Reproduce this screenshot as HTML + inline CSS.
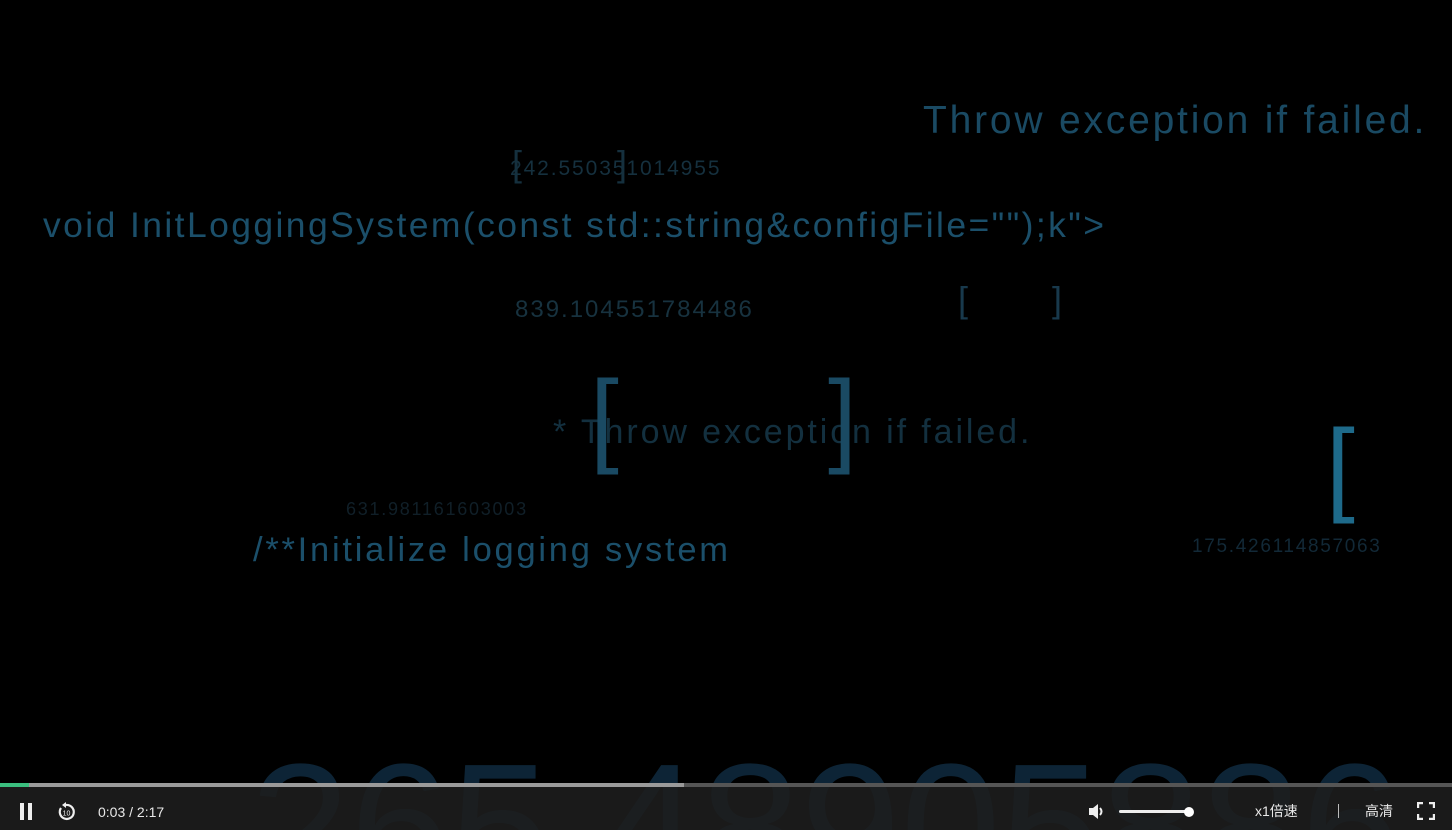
<!DOCTYPE html>
<html style="width:1452px;height:830px;overflow:hidden"><head><meta charset="utf-8"><style>
body{margin:0;width:1452px;height:830px;background:#000;overflow:hidden;position:relative;font-family:"Liberation Sans","Noto Sans CJK SC",sans-serif}
.t{position:absolute;white-space:nowrap;line-height:1}
.bar{position:absolute;left:0;top:787px;width:1452px;height:43px;background:rgba(30,30,30,.88)}
.ctl{position:absolute;color:#e8e8e8;font-size:14px;line-height:1}
</style></head><body>
<div class="t" style="left:923px;top:101px;font-size:39px;color:#1a4a63;letter-spacing:2.8px">Throw exception if failed.</div>
<div class="t" style="left:510px;top:158px;font-size:21px;color:#15303e;letter-spacing:1.9px">242.550351014955</div>
<div class="t" style="left:512px;top:146px;font-size:36px;color:#15303e">[</div>
<div class="t" style="left:617px;top:146px;font-size:36px;color:#15303e">]</div>
<div class="t" style="left:43px;top:208px;font-size:35.5px;color:#1b4f6a;letter-spacing:2.4px">void InitLoggingSystem(const std::string&amp;configFile="");k"&gt;</div>
<div class="t" style="left:515px;top:298px;font-size:24px;color:#17323f;letter-spacing:2px">839.104551784486</div>
<div class="t" style="left:958px;top:282px;font-size:36px;color:#18394c">[</div>
<div class="t" style="left:1052px;top:282px;font-size:36px;color:#18394c">]</div>
<div class="t" style="left:553px;top:415px;font-size:34px;color:#13303f;letter-spacing:2.9px">* Throw exception if failed.</div>
<div class="t" style="left:590px;top:366px;font-size:104px;color:#1a4a63">[</div>
<div class="t" style="left:828px;top:366px;font-size:104px;color:#1a4a63">]</div>
<div class="t" style="left:346px;top:500px;font-size:18px;color:#101f28;letter-spacing:1.75px">631.981161603003</div>
<div class="t" style="left:253px;top:533px;font-size:34.5px;color:#1b4f6a;letter-spacing:2.75px">/**Initialize logging system</div>
<div class="t" style="left:1326px;top:415px;font-size:104px;color:#1e6a8a">[</div>
<div class="t" style="left:1192px;top:537px;font-size:19px;color:#122937;letter-spacing:1.7px">175.426114857063</div>
<div style="position:absolute;left:0;top:700px;width:1452px;height:130px;overflow:hidden">
<div class="t" style="left:250px;top:38px;font-size:180px;color:#0d2436">265.48905886</div>
</div>

<div style="position:absolute;left:0;top:783px;width:1452px;height:4px;background:#555"></div>
<div style="position:absolute;left:0;top:783px;width:684px;height:4px;background:#9a9a9a"></div>
<div style="position:absolute;left:0;top:783px;width:29px;height:4px;background:#3bbf7f"></div>
<div class="bar"></div>
<div style="position:absolute;left:20px;top:803px;width:4px;height:17px;background:#eee"></div>
<div style="position:absolute;left:28px;top:803px;width:4px;height:17px;background:#eee"></div>
<svg style="position:absolute;left:57px;top:802px" width="19" height="19" viewBox="0 0 19 19"><path d="M4 6 A7 7 0 1 0 9 3" fill="none" stroke="#eee" stroke-width="2.2"/><path d="M9 0 L9 6 L5 3 Z" fill="#eee"/><text x="9.5" y="13.5" font-size="7" fill="#eee" text-anchor="middle" font-family="Liberation Sans">10</text></svg>
<div class="ctl" style="left:98px;top:805px">0:03 / 2:17</div>
<svg style="position:absolute;left:1087px;top:802px" width="20" height="19" viewBox="0 0 20 19"><path d="M2 6 H6 L11 2 V17 L6 13 H2 Z" fill="#eee"/><path d="M13 6 Q16 9.5 13 13" fill="none" stroke="#eee" stroke-width="2"/></svg>
<div style="position:absolute;left:1119px;top:810px;width:70px;height:3px;background:#eee;border-radius:2px"></div>
<div style="position:absolute;left:1184px;top:807px;width:10px;height:10px;background:#fff;border-radius:50%"></div>
<div class="ctl" style="left:1255px;top:804px">x1倍速</div>
<div style="position:absolute;left:1338px;top:804px;width:1px;height:14px;background:#bbb"></div>
<div class="ctl" style="left:1365px;top:804px">高清</div>
<svg style="position:absolute;left:1417px;top:802px" width="18" height="18" viewBox="0 0 18 18"><path d="M1 6V1H6M12 1H17V6M17 12V17H12M6 17H1V12" fill="none" stroke="#eee" stroke-width="2.4"/></svg>
</body></html>
